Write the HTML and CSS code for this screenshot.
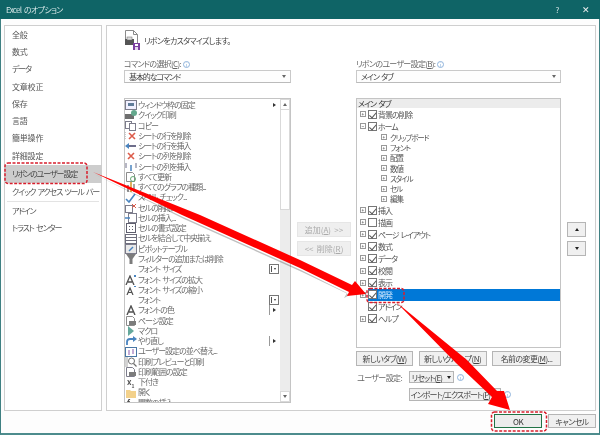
FILE: index.html
```html
<!DOCTYPE html>
<html lang="ja">
<head>
    <meta charset="UTF-8">
    <title>Excel のオプション</title>
    <link rel="stylesheet" href="styles.css">
</head>
<body>
    <div class="window">
        <div class="titlebar">
            <span class="title">Excel のオプション</span>
            <span class="help">?</span>
            <span class="close">✕</span>
        </div>
        <div class="main">
            <div class="sidebar">
                <div class="nav-item kanji">全般</div>
                <div class="nav-item kanji">数式</div>
                <div class="nav-item">データ</div>
                <div class="nav-item kanji">文章校正</div>
                <div class="nav-item kanji">保存</div>
                <div class="nav-item kanji">言語</div>
                <div class="nav-item kanji">簡単操作</div>
                <div class="nav-item kanji">詳細設定</div>
                <div class="nav-item selected">リボンのユーザー設定</div>
                <div class="nav-item">クイック アクセス ツール バー</div>
                <div class="nav-sep"></div>
                <div class="nav-item">アドイン</div>
                <div class="nav-item">トラスト センター</div>
            </div>
            <div class="panel">
                <div class="heading">
                    <svg class="heading-icon" width="16" height="20" viewBox="0 0 16 20">
                        <path d="M1.500 .5h8l4 4v9h-12z" fill="#fff" stroke="#8a8a8a"/>
                        <path d="M9.500 .5v4h4" fill="none" stroke="#8a8a8a"/>
                        <rect x="1" y="9" width="9" height="6" fill="#555"/>
                        <rect x="3" y="7" width="5" height="3" fill="#ddd" stroke="#666" stroke-width=".5"/>
                        <rect x="9" y="13" width="7" height="7" fill="#7b3fa0"/>
                        <rect x="11" y="14" width="3" height="2" fill="#fff"/>
                        <rect x="11" y="17" width="3" height="3" fill="#e5d8ee"/>
                    </svg>
                    <span>リボンをカスタマイズします。</span>
                </div>
                <div class="columns">
                    <div class="col-left">
                        <div class="field-label">コマンドの選択(<u>C</u>):<span class="info">i</span></div>
                        <div class="select"><span>基本的なコマンド</span><span class="caret"></span></div>
                        <div class="listbox commands">
                            <div class="cmd-rows">
                                <div class="cmd"><svg class="ico" viewBox="0 0 12 10"><rect x=".5" y=".5" width="11" height="9" fill="#eef" stroke="#667"/><rect x="3" y="3" width="6" height="3" fill="#468"/></svg>ウィンドウ枠の固定<i class="sub"></i></div>
                                <div class="cmd"><svg class="ico" viewBox="0 0 12 10"><rect x="0" y="4" width="9" height="5" fill="#555"/><circle cx="9" cy="3" r="3" fill="#4a9a7a"/></svg>クイック印刷</div>
                                <div class="cmd"><svg class="ico" viewBox="0 0 12 10"><rect x=".5" y=".5" width="6" height="7" fill="#fff" stroke="#667"/><rect x="4.500" y="2.500" width="6" height="7" fill="#fff" stroke="#667"/></svg>コピー</div>
                                <div class="cmd"><svg class="ico" viewBox="0 0 12 10"><path d="M0 1v8" stroke="#888" stroke-dasharray="1 1"/><path d="M4 2l6 6M10 2l-6 6" stroke="#d6402c" stroke-width="1.600"/></svg>シートの行を削除</div>
                                <div class="cmd"><svg class="ico" viewBox="0 0 12 10"><path d="M4 5h7" stroke="#557" stroke-width="2"/><path d="M0 5l4-3v6z" fill="#2a6fb5"/></svg>シートの行を挿入</div>
                                <div class="cmd"><svg class="ico" viewBox="0 0 12 10"><path d="M3 2l6 6M9 2l-6 6" stroke="#d6402c" stroke-width="1.600"/></svg>シートの列を削除</div>
                                <div class="cmd"><svg class="ico" viewBox="0 0 12 10"><path d="M6 9V3" stroke="#2a6fb5" stroke-width="1.500"/><path d="M1 1v5M11 1v5" stroke="#557"/></svg>シートの列を挿入</div>
                                <div class="cmd"><svg class="ico" viewBox="0 0 12 10"><path d="M1.500 .5h6l2 2v7h-8z" fill="#fff" stroke="#777"/><circle cx="8" cy="7" r="2.500" fill="none" stroke="#4a9a5a"/></svg>すべて更新</div>
                                <div class="cmd"><svg class="ico" viewBox="0 0 12 10"><rect x="2" y="3" width="2" height="7" fill="#888"/><rect x="5" y="0" width="2" height="10" fill="#d9a441"/><rect x="8" y="2" width="2" height="8" fill="#999"/></svg>すべてのグラフの種類...</div>
                                <div class="cmd"><svg class="ico" viewBox="0 0 12 10"><path d="M1 6l3 3 6-8" fill="none" stroke="#2a6fb5" stroke-width="1.600"/></svg>スペル チェック...</div>
                                <div class="cmd"><svg class="ico" viewBox="0 0 12 10"><rect x=".5" y="2.500" width="7" height="7" fill="#fff" stroke="#667"/><path d="M7 1l4 4M11 1l-4 4" stroke="#d6402c"/></svg>セルの削除...</div>
                                <div class="cmd"><svg class="ico" viewBox="0 0 12 10"><rect x="3.500" y=".5" width="8" height="9" fill="#fff" stroke="#667"/><path d="M0 5h5" stroke="#2a6fb5" stroke-width="1.500"/></svg>セルの挿入...</div>
                                <div class="cmd"><svg class="ico" viewBox="0 0 12 10"><rect x="1.500" y=".5" width="9" height="9" fill="#fff" stroke="#445"/><path d="M4 3.500h1M7 3.500h1M4 6.500h1M7 6.500h1" stroke="#445"/></svg>セルの書式設定</div>
                                <div class="cmd"><svg class="ico" viewBox="0 0 12 10"><rect x=".5" y=".5" width="11" height="9" fill="#fff" stroke="#556"/><path d="M.5 3.500h11M.5 6.500h11" stroke="#556"/></svg>セルを結合して中央揃え</div>
                                <div class="cmd"><svg class="ico" viewBox="0 0 12 10"><rect x=".5" y=".5" width="11" height="9" fill="#e6e6e6" stroke="#667"/><path d="M4 7l4-4" stroke="#2a6fb5" stroke-width="1.500"/></svg>ピボットテーブル</div>
                                <div class="cmd"><svg class="ico" viewBox="0 0 12 10"><path d="M1 0h10L7.500 5v5h-3V5z" fill="#666"/></svg>フィルターの追加または削除</div>
                                <div class="cmd"><span class="ico"></span>フォント サイズ<i class="combo"></i></div>
                                <div class="cmd"><svg class="ico" viewBox="0 0 12 10"><path d="M1 10L5 1l4 9M3 7h4" fill="none" stroke="#333" stroke-width="1.300"/><rect x="9" y="0" width="2" height="2" fill="#2a6fb5"/></svg>フォント サイズの拡大</div>
                                <div class="cmd"><svg class="ico" viewBox="0 0 12 10"><path d="M2 10l3-7 3 7M3.500 7.500h3" fill="none" stroke="#333" stroke-width="1.200"/><rect x="9" y="1" width="2" height="1" fill="#2a6fb5"/></svg>フォント サイズの縮小</div>
                                <div class="cmd"><span class="ico"></span>フォント<i class="combo"></i></div>
                                <div class="cmd"><svg class="ico" viewBox="0 0 12 10"><path d="M2 10L6 1l4 9M4 7h4" fill="none" stroke="#333" stroke-width="1.400"/></svg>フォントの色<i class="sub bar"></i></div>
                                <div class="cmd"><svg class="ico" viewBox="0 0 12 10"><path d="M1.500 .5h6l2 2v7h-8z" fill="#fff" stroke="#777"/><rect x="4" y="5" width="7" height="4" fill="#666"/></svg>ページ設定</div>
                                <div class="cmd"><svg class="ico" viewBox="0 0 12 10"><path d="M3 0l6 5-6 5z" fill="#4a9a8a"/></svg>マクロ</div>
                                <div class="cmd"><svg class="ico" viewBox="0 0 12 10"><path d="M2 9V6a3 3 0 0 1 3-3h4" fill="none" stroke="#2a6fb5" stroke-width="1.800"/><path d="M8 0l4 3-4 3z" fill="#2a6fb5"/></svg>やり直し<i class="sub bar"></i></div>
                                <div class="cmd"><svg class="ico" viewBox="0 0 12 10"><rect x=".5" y=".5" width="11" height="9" fill="#fff" stroke="#2a5f95"/><path d="M4 3v5M8 2v5" stroke="#7b3fa0"/></svg>ユーザー設定の並べ替え...</div>
                                <div class="cmd"><svg class="ico" viewBox="0 0 12 10"><rect width="3" height="10" fill="#ccc"/><circle cx="6.500" cy="4" r="3" fill="#fff" stroke="#555"/><path d="M8.500 6.500l3 3" stroke="#555" stroke-width="1.300"/></svg>印刷プレビューと印刷</div>
                                <div class="cmd"><svg class="ico" viewBox="0 0 12 10"><path d="M1.500 .5h6l2 2v7h-8z" fill="#fff" stroke="#667"/><rect x="4" y="5" width="7" height="4" fill="#666"/></svg>印刷範囲の設定</div>
                                <div class="cmd"><span class="ico xsub">x<sub>1</sub></span>下付き</div>
                                <div class="cmd"><svg class="ico" viewBox="0 0 12 10"><path d="M1 2h4l1 1h5v7H1z" fill="#f2c977"/></svg>開く</div>
                                <div class="cmd"><span class="ico fx">f<sub>x</sub></span>関数の挿入</div>
                            </div>
                            <div class="scrollbar">
                                <div class="scroll-btn"><span class="up"></span></div>
                                <div class="scroll-thumb"></div>
                                <div class="scroll-track"></div>
                                <div class="scroll-btn"><span class="down"></span></div>
                            </div>
                        </div>
                    </div>
                    <div class="col-mid">
                        <div class="btn disabled">追加(<u>A</u>) &gt;&gt;</div>
                        <div class="btn disabled">&lt;&lt; 削除(<u>R</u>)</div>
                    </div>
                    <div class="col-right">
                        <div class="field-label">リボンのユーザー設定(<u>B</u>):<span class="info">i</span></div>
                        <div class="select"><span>メイン タブ</span><span class="caret"></span></div>
                        <div class="listbox tree">
                            <div class="tree-head">メイン タブ</div>
                            <div class="tree-row top"><i class="box">+</i><i class="check on"></i>背景の削除</div>
                            <div class="tree-row top"><i class="box">−</i><i class="check on"></i>ホーム</div>
                            <div class="tree-row child"><i class="box">+</i>クリップボード</div>
                            <div class="tree-row child"><i class="box">+</i>フォント</div>
                            <div class="tree-row child"><i class="box">+</i>配置</div>
                            <div class="tree-row child"><i class="box">+</i>数値</div>
                            <div class="tree-row child"><i class="box">+</i>スタイル</div>
                            <div class="tree-row child"><i class="box">+</i>セル</div>
                            <div class="tree-row child"><i class="box">+</i>編集</div>
                            <div class="tree-row top"><i class="box">+</i><i class="check on"></i>挿入</div>
                            <div class="tree-row top"><i class="box">+</i><i class="check"></i>描画</div>
                            <div class="tree-row top"><i class="box">+</i><i class="check on"></i>ページ レイアウト</div>
                            <div class="tree-row top"><i class="box">+</i><i class="check on"></i>数式</div>
                            <div class="tree-row top"><i class="box">+</i><i class="check on"></i>データ</div>
                            <div class="tree-row top"><i class="box">+</i><i class="check on"></i>校閲</div>
                            <div class="tree-row top"><i class="box">+</i><i class="check on"></i>表示</div>
                            <div class="tree-row top active"><i class="box">+</i><span class="active-bar"><i class="check on"></i>開発</span></div>
                            <div class="tree-row top"><i class="box none"></i><i class="check on"></i>アドイン</div>
                            <div class="tree-row top"><i class="box">+</i><i class="check on"></i>ヘルプ</div>
                        </div>
                        <div class="btn-row">
                            <div class="btn">新しいタブ(<u>W</u>)</div>
                            <div class="btn">新しいグループ(<u>N</u>)</div>
                            <div class="btn">名前の変更(<u>M</u>)...</div>
                        </div>
                        <div class="custom-row">
                            <span class="custom-label">ユーザー設定:</span>
                            <div class="btn small reset">リセット(<u>E</u>) <span class="caret dark"></span></div>
                            <span class="info">i</span>
                        </div>
                        <div class="custom-row second">
                            <div class="btn small export">インポート/エクスポート(<u>P</u>) <span class="caret dark"></span></div>
                            <span class="info">i</span>
                        </div>
                    </div>
                    <div class="col-updown">
                        <div class="btn arrow"><span class="up dark"></span></div>
                        <div class="btn arrow"><span class="down dark"></span></div>
                    </div>
                </div>
            </div>
        </div>
        <div class="footer">
            <div class="btn ok">OK</div>
            <div class="btn cancel">キャンセル</div>
        </div>
    </div>

    <svg class="overlay" width="600" height="435" viewBox="0 0 600 435">
        <!-- soft shadow under the first arrow -->
        <polygon points="94,174 183,217 301,270 347,293 344,298 350,295 302,272 184,219" fill="#000" opacity=".25"/>
        <!-- red arrows -->
        <polygon points="93,172 200,215 300,260 352,285 355,281 366,294 347,296 349,292 300,268 182,215" fill="#f00"/>
        <polygon points="396,302 467,360 497,391 504,391 510,410 488,404 492,397 456,363" fill="#f00"/>
        <!-- dashed highlights -->
        <rect x="5" y="163" width="82" height="20.500" rx="3" fill="none" stroke="#d81e2c" stroke-width="1.500" stroke-dasharray="3 1.500"/>
        <rect x="367" y="288.500" width="37" height="14" rx="3" fill="none" stroke="#d81e2c" stroke-width="1.500" stroke-dasharray="3 1.500"/>
        <rect x="491.500" y="412" width="55" height="19" rx="3" fill="none" stroke="#d81e2c" stroke-width="1.500" stroke-dasharray="3 1.500"/>
    </svg>
</body>
</html>
```

FILE: styles.css
```css
* {
    box-sizing: border-box;
}
html, body {
    margin: 0;
    padding: 0;
    background: #fff;
}
body {
    width: 600px;
    height: 435px;
    overflow: hidden;
    position: relative;
    font-family: "Noto Sans CJK JP", "Noto Sans", sans-serif;
    font-size: 8px;
    font-feature-settings: "palt";
    letter-spacing: -.6px;
    word-spacing: 1.500px;
    color: #555;
}
.window {
    width: 600px;
    height: 435px;
    display: flex;
    flex-direction: column;
    background: #fdfdfd;
    border-left: 1px solid #3f8082;
    border-right: 1px solid #3f8082;
    border-bottom: 2px solid #4d8c8d;
    filter: blur(.35px);
}
.titlebar {
    height: 19px;
    margin: 0 -1px;
    flex: none;
    display: flex;
    align-items: center;
    padding: 0 11px 0 6px;
    background: #0f6466;
    color: #d5e6e6;
    letter-spacing: -.7px;
}
.title {
    flex: 1;
}
.help {
    margin-right: 23px;
}
.close {
    font-size: 9px;
    color: #eee;
}
.main {
    height: 392px;
    flex: none;
    display: flex;
    gap: 4px;
    padding: 6px 3px 0 3px;
}
.sidebar {
    width: 98px;
    height: 386px;
    border: 1px solid #cfcfcf;
    background: #fff;
}
.nav-item {
    height: 17.300px;
    line-height: 17.300px;
    padding-left: 7px;
    white-space: nowrap;
    letter-spacing: -1.100px;
}
.nav-item.kanji {
    letter-spacing: -.2px;
}
.nav-item:first-child {
    margin-top: -.35px;
}
.nav-item.selected {
    background: #cdcdcd;
    color: #444;
    margin-top: 1px;
    margin-right: -1px;
    height: 18px;
    line-height: 18px;
}
.nav-sep {
    height: 1px;
    background: #e3e3e3;
    margin: .5px 2px 0;
}
.panel {
    width: 490px;
    height: 386px;
    border: 1px solid #cfcfcf;
    background: #fff;
    padding: 4px 0 0 17px;
}
.heading {
    display: flex;
    align-items: center;
    gap: 4px;
    height: 20px;
    color: #444;
    letter-spacing: -.7px;
}
.columns {
    display: flex;
    margin-top: 7px;
}
.col-left {
    width: 167px;
    flex: none;
}
.field-label {
    height: 13px;
    line-height: 13px;
    color: #666;
    white-space: nowrap;
    letter-spacing: -.7px;
}
.info {
    display: inline-block;
    width: 7px;
    height: 7px;
    margin-left: 2px;
    border: 1px solid #8fb4dc;
    border-radius: 50%;
    color: #7aa6d6;
    font-size: 5px;
    line-height: 5px;
    text-align: center;
    letter-spacing: 0;
}
.select {
    height: 13px;
    padding: 0 4px;
    display: flex;
    align-items: center;
    justify-content: space-between;
    border: 1px solid #c9c9c9;
    border-bottom-color: #bbb;
    background: #fdfdfd;
    color: #444;
    letter-spacing: -1.100px;
}
.caret {
    display: inline-block;
    border-left: 2.500px solid transparent;
    border-right: 2.500px solid transparent;
    border-top: 3px solid #666;
}
.caret.dark {
    border-top-color: #222;
    margin-left: 3px;
}
.listbox {
    margin-top: 15px;
    border: 1px solid #c4c4c4;
    background: #fff;
}
.commands {
    height: 305px;
    display: flex;
    overflow: hidden;
}
.cmd-rows {
    flex: 1;
    min-width: 0;
    overflow: hidden;
    padding-top: 1px;
}
.cmd {
    height: 10.270px;
    line-height: 10.270px;
    position: relative;
    display: flex;
    align-items: center;
    white-space: nowrap;
    color: #6a6a6a;
    letter-spacing: -1px;
}
.ico {
    width: 12px;
    height: 10px;
    flex: none;
    margin-right: 1px;
    opacity: .85;
}
.xsub, .fx {
    font-weight: 700;
    padding-left: 2px;
    line-height: 10px;
    color: #333;
    font-style: normal;
    letter-spacing: 0;
}
.xsub sub, .fx sub {
    font-size: 5px;
    line-height: 0;
}
.sub {
    position: absolute;
    right: 4px;
    top: 3px;
    border-top: 2.500px solid transparent;
    border-bottom: 2.500px solid transparent;
    border-left: 3px solid #333;
}
.sub.bar::before {
    content: "";
    position: absolute;
    left: -7px;
    top: -5px;
    height: 10px;
    width: 1px;
    background: #999;
}
.combo {
    position: absolute;
    right: 1px;
    top: 0;
    width: 10px;
    height: 10px;
    border: 1px solid #777;
    background: #fff;
}
.combo::after {
    content: "";
    position: absolute;
    left: 4px;
    top: 3px;
    border-left: 1.500px solid transparent;
    border-right: 1.500px solid transparent;
    border-top: 2px solid #333;
}
.combo::before {
    content: "";
    position: absolute;
    left: 1px;
    top: 1px;
    width: 2px;
    height: 6px;
    border-left: 1px solid #555;
}
.scrollbar {
    width: 10px;
    flex: none;
    display: flex;
    flex-direction: column;
    background: #ececec;
}
.scroll-btn {
    height: 11px;
    flex: none;
    display: flex;
    align-items: center;
    justify-content: center;
    background: #fff;
    border: 1px solid #d9d9d9;
}
.scroll-thumb {
    height: 100px;
    flex: none;
    background: #fff;
    border: 1px solid #d9d9d9;
    border-top: 0;
}
.scroll-track {
    flex: 1;
}
.up, .down {
    display: inline-block;
    border-left: 2.500px solid transparent;
    border-right: 2.500px solid transparent;
}
.up {
    border-bottom: 3px solid #666;
}
.down {
    border-top: 3px solid #666;
}
.up.dark {
    border-bottom-color: #222;
}
.down.dark {
    border-top-color: #222;
}
.col-mid {
    width: 65px;
    flex: none;
    display: flex;
    flex-direction: column;
    gap: 4px;
    padding: 165px 0 0 6px;
}
.btn {
    display: flex;
    align-items: center;
    justify-content: center;
    height: 15px;
    padding: 0 6px;
    border: 1px solid #b5b5b5;
    background: #f0f0f0;
    color: #444;
    white-space: pre;
}
.btn.disabled {
    width: 54px;
    padding: 0;
    border-color: #e6e6e6;
    background: #efefef;
    color: #aaa;
    letter-spacing: 0;
}
.col-right {
    width: 205px;
    flex: none;
}
.tree {
    height: 250px;
    overflow: hidden;
}
.tree-head {
    height: 9px;
    line-height: 9px;
    padding-left: 1px;
    background: #ececec;
    color: #333;
    letter-spacing: -1px;
}
.tree-row {
    display: flex;
    align-items: center;
    white-space: nowrap;
    color: #555;
    letter-spacing: -1.100px;
}
.tree-row.top {
    height: 12.100px;
    padding-left: 3px;
}
.tree-row.child {
    height: 10.270px;
    padding-left: 24px;
    font-size: 7.500px;
}
.box {
    width: 6px;
    height: 6px;
    flex: none;
    margin-right: 2px;
    border: 1px solid #999;
    font-size: 5px;
    line-height: 4px;
    text-align: center;
    font-style: normal;
    letter-spacing: 0;
    color: #222;
}
.box.none {
    border: 0;
}
.tree-row.child .box {
    margin-right: 3px;
}
.check {
    width: 9px;
    height: 9px;
    flex: none;
    margin-right: 1px;
    border: 1px solid #777;
    background: #fff;
    position: relative;
}
.check.on::after {
    content: "";
    position: absolute;
    left: 2px;
    top: 0;
    width: 3px;
    height: 5.500px;
    border: solid #555;
    border-width: 0 1px 1px 0;
    transform: rotate(40deg);
}
.active-bar {
    flex: 1;
    display: flex;
    align-items: center;
    height: 100%;
    background: #0078d7;
    color: #d8ecff;
}
.btn-row {
    display: flex;
    justify-content: space-between;
    margin-top: 3px;
}
.btn-row .btn {
    padding: 0;
}
.btn-row .btn:nth-child(1) {
    width: 57px;
}
.btn-row .btn:nth-child(2) {
    width: 68px;
}
.btn-row .btn:nth-child(3) {
    width: 69px;
}
.custom-row {
    display: flex;
    align-items: center;
    margin-top: 5px;
    height: 12px;
}
.custom-row.second {
    height: 13px;
    padding-left: 53px;
}
.custom-label {
    width: 53px;
    padding-left: 1px;
    color: #666;
}
.btn.small {
    height: 100%;
    padding: 0;
    letter-spacing: -.9px;
}
.btn.reset {
    width: 45px;
}
.btn.export {
    width: 92px;
}
.custom-row .info {
    margin-left: 3px;
}
.col-updown {
    display: flex;
    flex-direction: column;
    gap: 4px;
    padding: 165px 0 0 6px;
}
.btn.arrow {
    width: 19px;
    padding: 0;
}
.footer {
    flex: 1;
    display: flex;
    justify-content: flex-end;
    align-items: flex-start;
    gap: 6px;
    padding: 3px 3px 0 0;
}
.footer .btn {
    width: 48px;
    height: 14px;
    padding: 0;
}
.btn.ok {
    border: 1px solid #217346;
    background: #ececec;
    color: #333;
}
.overlay {
    position: absolute;
    left: 0;
    top: 0;
    pointer-events: none;
}
```
